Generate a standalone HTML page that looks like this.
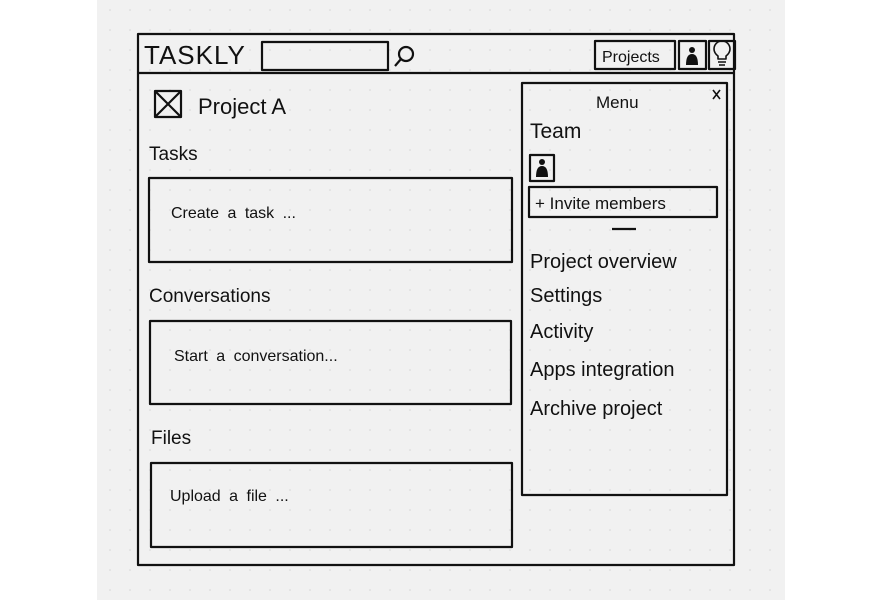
<!DOCTYPE html>
<html><head><meta charset="utf-8"><style>
html,body{margin:0;padding:0;background:#fff;}
svg{display:block}
text{font-family:"Liberation Sans",sans-serif;fill:#111;}
</style></head><body>
<svg width="880" height="600" viewBox="0 0 880 600" xmlns="http://www.w3.org/2000/svg">
<defs><pattern id="d" width="20" height="20" patternUnits="userSpaceOnUse"><circle cx="10" cy="10" r="0.8" fill="#d4d4d4"/></pattern></defs>
<rect x="0" y="0" width="880" height="600" fill="#fff"/>
<rect x="97" y="0" width="688" height="600" fill="#f1f1f1"/>
<rect x="97" y="0" width="688" height="600" fill="url(#d)"/>
<g fill="none" stroke="#111" stroke-width="2.2" stroke-linejoin="round">
<rect x="138" y="34" width="596" height="531"/>
<line x1="138" y1="73" x2="734" y2="73"/>
<rect x="262" y="42" width="126" height="28"/>
<circle cx="406" cy="54" r="7"/><line x1="401" y1="59" x2="395" y2="66"/>
<rect x="595" y="41" width="80" height="28"/>
<rect x="679" y="41" width="27" height="28"/>
<rect x="709" y="41" width="26" height="28"/>
<rect x="155" y="91" width="26" height="26"/>
<line x1="155" y1="91" x2="181" y2="117"/><line x1="181" y1="91" x2="155" y2="117"/>
<rect x="149" y="178" width="363" height="84"/>
<rect x="150" y="321" width="361" height="83"/>
<rect x="151" y="463" width="361" height="84"/>
<rect x="522" y="83" width="205" height="412"/>
<rect x="530" y="155" width="24" height="26"/>
<rect x="529" y="187" width="188" height="30"/>
<line x1="612" y1="229" x2="636" y2="229"/>
<path d="M713 90 L720 99 M720 90 L713 99" stroke-width="1.6"/>
<path d="M718 56 q-4 -3 -4 -7 a8 8 0 1 1 16 0 q0 4 -4 7 v3 h-8z M718 62 h8 M719 65 h6" stroke-width="1.6"/>
</g>
<g fill="#111">
<circle cx="692" cy="50" r="3"/><path d="M686 65 q0 -11 6 -11 q6 0 6 11z"/>
<circle cx="542" cy="162" r="3"/><path d="M536 177 q0 -11 6 -11 q6 0 6 11z"/>
</g>
<text x="144" y="64" font-size="26" letter-spacing="1">TASKLY</text>
<text x="602" y="62" font-size="16">Projects</text>
<text x="198" y="114" font-size="22">Project A</text>
<text x="149" y="160" font-size="19">Tasks</text>
<text x="171" y="218" font-size="16" word-spacing="4">Create a task ...</text>
<text x="149" y="302" font-size="19">Conversations</text>
<text x="174" y="361" font-size="16" word-spacing="4">Start a conversation...</text>
<text x="151" y="444" font-size="19">Files</text>
<text x="170" y="501" font-size="16" word-spacing="4">Upload a file ...</text>
<text x="596" y="108" font-size="17">Menu</text>
<text x="530" y="138" font-size="21">Team</text>
<text x="535" y="209" font-size="17">+ Invite members</text>
<text x="530" y="268" font-size="20">Project overview</text>
<text x="530" y="302" font-size="20">Settings</text>
<text x="530" y="338" font-size="20">Activity</text>
<text x="530" y="376" font-size="20">Apps integration</text>
<text x="530" y="415" font-size="20">Archive project</text>
</svg>
</body></html>
